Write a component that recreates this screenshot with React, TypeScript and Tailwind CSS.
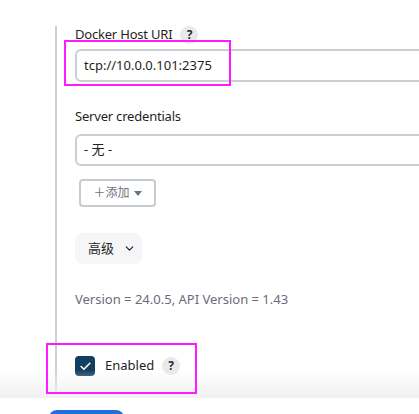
import { Check, ChevronDown } from "lucide-react";

const font = { fontFamily: '"Segoe UI", "Noto Sans", "Noto Sans CJK SC", sans-serif' };

function Help() {
  return (
    <span className="ml-[8px] inline-flex h-[18px] w-[18px] items-center justify-center rounded-full bg-[#e9e9ec] text-[12px] font-bold text-[#2a2a33]">
      ?
    </span>
  );
}

export default function App() {
  return (
    <div
      className="relative h-[414px] w-[419px] overflow-hidden bg-white text-[#1f1f24]"
      style={font}
    >
      <div className="pl-[55px] pt-[23px]">
        <div className="h-[400px] border-l-2 border-[#c9d1d6] pl-[18px]">
          <div className="mt-[3px] flex h-[18px] items-center text-[13px] tracking-[-0.2px]">
            Docker Host URI
            <Help />
          </div>
          <div className="mt-[5px] flex h-[33px] w-[360px] items-center rounded-md border-2 border-[#c9d0d5] pl-[7px] text-[13px]">
            tcp://10.0.0.101:2375
          </div>

          <div className="mt-[26px] flex h-[18px] items-center text-[13px] tracking-[-0.2px]">
            Server credentials
          </div>
          <div className="mt-[8px] flex h-[32px] w-[360px] items-center rounded-md border-2 border-[#c9d0d5] pl-[7px] text-[13px]">
            - 无 -
          </div>

          <div className="ml-[4px] mt-[13px] flex h-[28px] w-[77px] items-center justify-center gap-[4px] rounded border-2 border-[#c4ccd2] text-[12px] text-[#70737a]">
            <span>＋添加</span>
            <svg width="8" height="5" viewBox="0 0 8 5">
              <path d="M0 0h8L4 5z" fill="#70737a" />
            </svg>
          </div>

          <div className="mt-[26px] flex h-[31px] w-[67px] items-center gap-[9px] rounded-lg bg-[#f6f6f9] pl-[13px] text-[13px]">
            <span>高级</span>
            <ChevronDown size={13} strokeWidth={2.2} />
          </div>

          <div className="mt-[27px] flex h-[18px] items-center text-[13px] text-[#6b6b7a]">
            Version = 24.0.5, API Version = 1.43
          </div>

          <div className="mt-[47px] flex h-[20px] items-center">
            <span className="flex h-[20px] w-[20px] items-center justify-center rounded-[4px] bg-[#123e5f]">
              <Check size={13} strokeWidth={3} color="white" />
            </span>
            <span className="ml-[10px] text-[13px]">Enabled</span>
            <Help />
          </div>
        </div>
      </div>

      {/* sticky bottom bar with its shadow */}
      <div className="absolute inset-x-0 bottom-0">
        <div className="h-[28px] bg-gradient-to-b from-white/0 to-[#f1f1f1]" />
        <div className="h-[16px] bg-white pl-[49px] pt-[12px]">
          <div className="h-[30px] w-[75px] rounded-lg bg-[#1f6fe0]" />
        </div>
      </div>

      {/* annotation boxes */}
      <div className="pointer-events-none absolute left-[64px] top-[40px] h-[46px] w-[167px] border-2 border-[#ff1aff]" />
      <div className="pointer-events-none absolute left-[46px] top-[343px] h-[51px] w-[151px] border-2 border-[#ff1aff]" />
    </div>
  );
}
